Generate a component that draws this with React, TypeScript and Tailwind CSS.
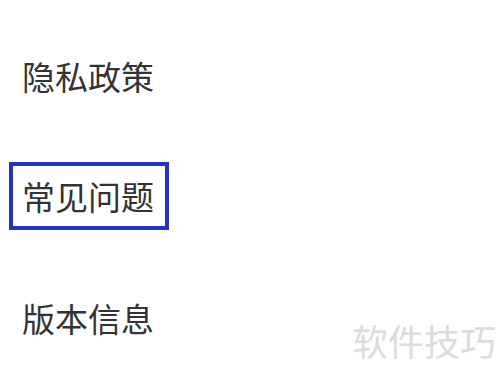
import React from "react";

const items = ["隐私政策", "常见问题", "版本信息"];

export default function App(): JSX.Element {
  return (
    <div
      className="relative w-[500px] h-[379px] overflow-hidden bg-white"
      style={{ fontFamily: '"Noto Sans CJK SC", "Noto Sans", sans-serif' }}
    >
      <div className="flex flex-col items-start pt-[54px]">
        {/* plain row */}
        <div className="pl-[22px] text-[33px] leading-[44px] text-[#333333]">{items[0]}</div>

        {/* highlighted row */}
        <div className="mt-[64px] ml-[9px] border-4 border-[#2534bd] pl-[9px] pr-[11px] py-[8px] text-[33px] leading-[44px] text-[#333333]">
          {items[1]}
        </div>

        <div className="mt-[66px] pl-[22px] text-[33px] leading-[44px] text-[#333333]">{items[2]}</div>
      </div>

      {/* watermark */}
      <div className="absolute left-[352px] top-[322px] text-[36px] leading-[36px] text-[#dcdcdc]">
        软件技巧
      </div>
    </div>
  );
}
